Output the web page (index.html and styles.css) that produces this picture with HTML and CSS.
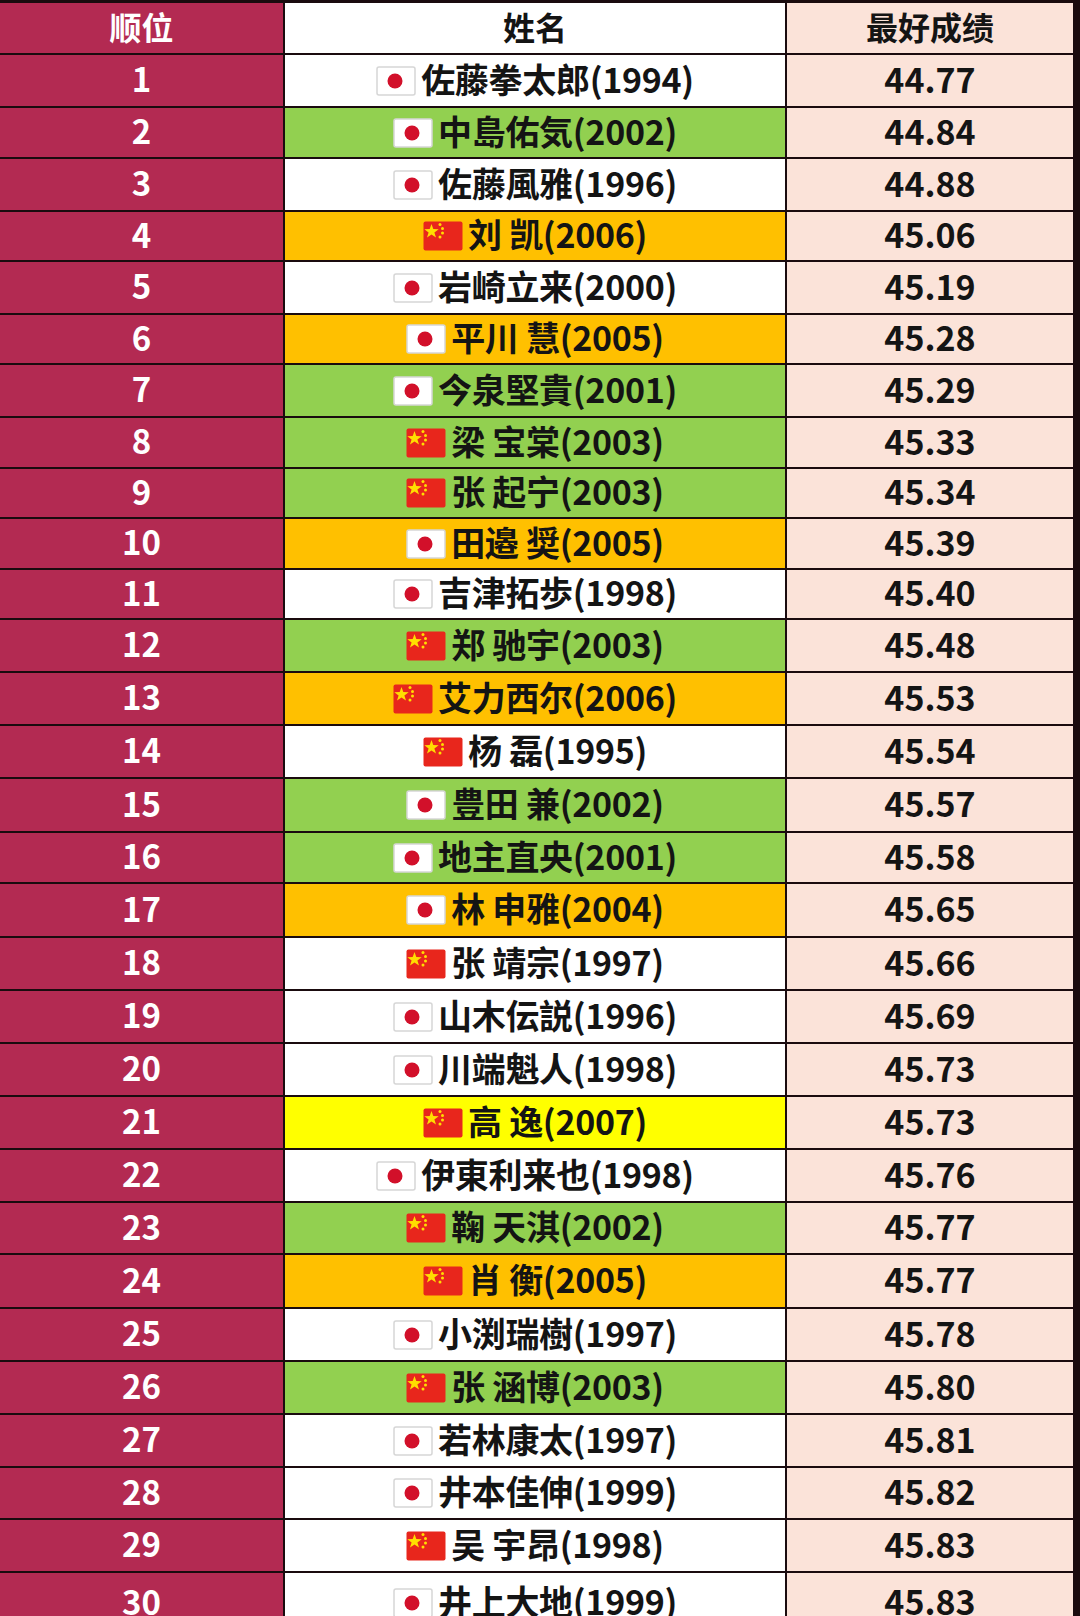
FILE: index.html
```html
<!DOCTYPE html>
<html lang="zh">
<head>
<meta charset="utf-8">
<title>排名</title>
<link rel="stylesheet" href="styles.css">
</head>
<body>
<svg width="0" height="0" class="defs">
  <defs>
    <symbol id="jp" viewBox="0 0 40 30">
      <rect x="1" y="1" width="38" height="28" rx="2" fill="#fff" stroke="#d6d6d6" stroke-width="1.5"/>
      <circle cx="19" cy="15" r="7.5" fill="#d2102a"/>
    </symbol>
    <symbol id="cn" viewBox="0 0 40 30">
      <rect x="0.5" y="0.5" width="39" height="29" rx="2" fill="#e8261c"/>
      <polygon fill="#ffde00" points="8.5,3 10.3,8.1 15.7,8.2 11.4,11.4 13,16.6 8.5,13.5 4,16.6 5.6,11.4 1.3,8.2 6.7,8.1"/>
      <circle cx="17" cy="3.5" r="1.5" fill="#ffde00"/>
      <circle cx="19.5" cy="7.5" r="1.5" fill="#ffde00"/>
      <circle cx="19.5" cy="12" r="1.5" fill="#ffde00"/>
      <circle cx="17" cy="16" r="1.5" fill="#ffde00"/>
    </symbol>
  </defs>
</svg>
<div class="table">
  <div class="cell rank head">顺位</div>
  <div class="cell name white head">姓名</div>
  <div class="cell score head">最好成绩</div>

  <div class="cell rank">1</div>
  <div class="cell name white"><svg class="flag"><use href="#jp"/></svg><span>佐藤拳太郎(1994)</span></div>
  <div class="cell score">44.77</div>

  <div class="cell rank">2</div>
  <div class="cell name green"><svg class="flag"><use href="#jp"/></svg><span>中島佑気(2002)</span></div>
  <div class="cell score">44.84</div>

  <div class="cell rank">3</div>
  <div class="cell name white"><svg class="flag"><use href="#jp"/></svg><span>佐藤風雅(1996)</span></div>
  <div class="cell score">44.88</div>

  <div class="cell rank">4</div>
  <div class="cell name orange"><svg class="flag"><use href="#cn"/></svg><span>刘 凯(2006)</span></div>
  <div class="cell score">45.06</div>

  <div class="cell rank">5</div>
  <div class="cell name white"><svg class="flag"><use href="#jp"/></svg><span>岩崎立来(2000)</span></div>
  <div class="cell score">45.19</div>

  <div class="cell rank">6</div>
  <div class="cell name orange"><svg class="flag"><use href="#jp"/></svg><span>平川 慧(2005)</span></div>
  <div class="cell score">45.28</div>

  <div class="cell rank">7</div>
  <div class="cell name green"><svg class="flag"><use href="#jp"/></svg><span>今泉堅貴(2001)</span></div>
  <div class="cell score">45.29</div>

  <div class="cell rank">8</div>
  <div class="cell name green"><svg class="flag"><use href="#cn"/></svg><span>梁 宝棠(2003)</span></div>
  <div class="cell score">45.33</div>

  <div class="cell rank">9</div>
  <div class="cell name green"><svg class="flag"><use href="#cn"/></svg><span>张 起宁(2003)</span></div>
  <div class="cell score">45.34</div>

  <div class="cell rank">10</div>
  <div class="cell name orange"><svg class="flag"><use href="#jp"/></svg><span>田邉 奨(2005)</span></div>
  <div class="cell score">45.39</div>

  <div class="cell rank">11</div>
  <div class="cell name white"><svg class="flag"><use href="#jp"/></svg><span>吉津拓歩(1998)</span></div>
  <div class="cell score">45.40</div>

  <div class="cell rank">12</div>
  <div class="cell name green"><svg class="flag"><use href="#cn"/></svg><span>郑 驰宇(2003)</span></div>
  <div class="cell score">45.48</div>

  <div class="cell rank">13</div>
  <div class="cell name orange"><svg class="flag"><use href="#cn"/></svg><span>艾力西尔(2006)</span></div>
  <div class="cell score">45.53</div>

  <div class="cell rank">14</div>
  <div class="cell name white"><svg class="flag"><use href="#cn"/></svg><span>杨 磊(1995)</span></div>
  <div class="cell score">45.54</div>

  <div class="cell rank">15</div>
  <div class="cell name green"><svg class="flag"><use href="#jp"/></svg><span>豊田 兼(2002)</span></div>
  <div class="cell score">45.57</div>

  <div class="cell rank">16</div>
  <div class="cell name green"><svg class="flag"><use href="#jp"/></svg><span>地主直央(2001)</span></div>
  <div class="cell score">45.58</div>

  <div class="cell rank">17</div>
  <div class="cell name orange"><svg class="flag"><use href="#jp"/></svg><span>林 申雅(2004)</span></div>
  <div class="cell score">45.65</div>

  <div class="cell rank">18</div>
  <div class="cell name white"><svg class="flag"><use href="#cn"/></svg><span>张 靖宗(1997)</span></div>
  <div class="cell score">45.66</div>

  <div class="cell rank">19</div>
  <div class="cell name white"><svg class="flag"><use href="#jp"/></svg><span>山木伝説(1996)</span></div>
  <div class="cell score">45.69</div>

  <div class="cell rank">20</div>
  <div class="cell name white"><svg class="flag"><use href="#jp"/></svg><span>川端魁人(1998)</span></div>
  <div class="cell score">45.73</div>

  <div class="cell rank">21</div>
  <div class="cell name yellow"><svg class="flag"><use href="#cn"/></svg><span>高 逸(2007)</span></div>
  <div class="cell score">45.73</div>

  <div class="cell rank">22</div>
  <div class="cell name white"><svg class="flag"><use href="#jp"/></svg><span>伊東利来也(1998)</span></div>
  <div class="cell score">45.76</div>

  <div class="cell rank">23</div>
  <div class="cell name green"><svg class="flag"><use href="#cn"/></svg><span>鞠 天淇(2002)</span></div>
  <div class="cell score">45.77</div>

  <div class="cell rank">24</div>
  <div class="cell name orange"><svg class="flag"><use href="#cn"/></svg><span>肖 衡(2005)</span></div>
  <div class="cell score">45.77</div>

  <div class="cell rank">25</div>
  <div class="cell name white"><svg class="flag"><use href="#jp"/></svg><span>小渕瑞樹(1997)</span></div>
  <div class="cell score">45.78</div>

  <div class="cell rank">26</div>
  <div class="cell name green"><svg class="flag"><use href="#cn"/></svg><span>张 涵博(2003)</span></div>
  <div class="cell score">45.80</div>

  <div class="cell rank">27</div>
  <div class="cell name white"><svg class="flag"><use href="#jp"/></svg><span>若林康太(1997)</span></div>
  <div class="cell score">45.81</div>

  <div class="cell rank">28</div>
  <div class="cell name white"><svg class="flag"><use href="#jp"/></svg><span>井本佳伸(1999)</span></div>
  <div class="cell score">45.82</div>

  <div class="cell rank">29</div>
  <div class="cell name white"><svg class="flag"><use href="#cn"/></svg><span>吴 宇昂(1998)</span></div>
  <div class="cell score">45.83</div>

  <div class="cell rank">30</div>
  <div class="cell name white"><svg class="flag"><use href="#jp"/></svg><span>井上大地(1999)</span></div>
  <div class="cell score">45.83</div>
</div>
</body>
</html>
```

FILE: styles.css
```css
html, body {
  margin: 0;
  padding: 0;
  background: #ffffff;
}
body {
  width: 1080px;
  height: 1616px;
  overflow: hidden;
  font-family: "Noto Sans CJK SC", "Noto Sans", sans-serif;
  font-weight: 700;
}
.defs {
  position: absolute;
  width: 0;
  height: 0;
}
.table {
  display: grid;
  grid-template-columns: 283px 500px 286px;
  grid-template-rows: 50px 51px 49px 51px 48px 51px 48px 51px 49px 48px 49px 48px 51px 51px 51px 52px 49px 52px 51px 51px 51px 51px 51px 50px 52px 51px 51px 51px 50px 51px 60px;
  gap: 2px;
  background: #1a0b0e;
  padding: 3px 7px 0 0;
  width: 1073px;
  height: 1640px;
}
.cell {
  display: flex;
  align-items: center;
  justify-content: center;
  font-size: 34px;
  line-height: 1;
  color: #141414;
  white-space: nowrap;
  padding-bottom: 4px;
  box-sizing: border-box;
}
.rank {
  background: #b32a52;
  color: #ffffff;
  font-size: 33px;
}
.score {
  background: #fbe3d9;
}
.white { background: #ffffff; }
.green { background: #92d050; }
.orange { background: #ffc000; }
.yellow { background: #ffff00; }
.head {
  font-size: 32px;
}
.flag {
  width: 40px;
  height: 30px;
  margin-right: 5px;
  margin-top: 4px;
  flex: none;
}
.name span {
  letter-spacing: -0.3px;
}
```
